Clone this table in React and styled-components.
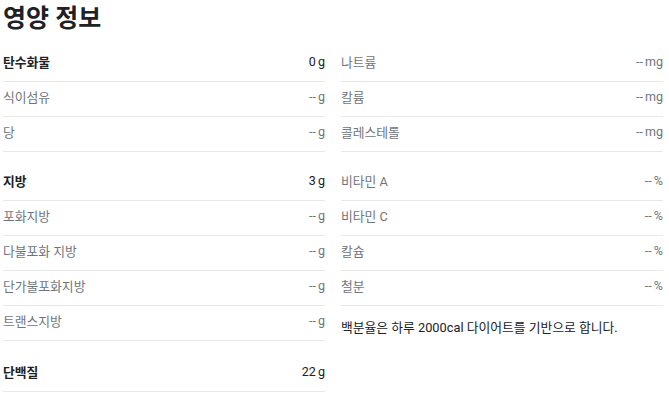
import React from 'react'
import styled, { createGlobalStyle } from 'styled-components'

const GlobalStyle = createGlobalStyle`
    body {
        margin: 0;
        background: #fff;
        font-family: Roboto, "Noto Sans CJK KR", sans-serif;
    }
`

const Panel = styled.div`
    width: 660px;
    padding: 0 0 0 3px;
`

const Title = styled.h2`
    margin: 0;
    font-size: 25px;
    font-weight: 700;
    line-height: 37px;
    color: #202124;
`

const Columns = styled.div`
    display: grid;
    grid-template-columns: 322px 322px;
    column-gap: 16px;
    margin-top: 10px;
`

const Column = styled.div`
    display: flex;
    flex-direction: column;
    gap: 14px;
`

const Section = styled.div`
    display: flex;
    flex-direction: column;
    margin-top: ${p => (p.$extra ? '2px' : '0')};
`

const Row = styled.div`
    display: flex;
    justify-content: space-between;
    align-items: center;
    height: 35px;
    padding-bottom: 5px;
    box-sizing: border-box;
    border-bottom: 1px solid #e8e8e8;
    font-size: 12.8px;
`

const Label = styled.span`
    color: ${p => (p.$main ? '#202124' : '#70757a')};
    font-weight: ${p => (p.$main ? 700 : 400)};
`

const Value = styled.span`
    color: ${p => (p.$main ? '#202124' : '#70757a')};
    font-size: 12.5px;
    word-spacing: -1px;
`

const Note = styled.p`
    margin: 0;
    line-height: 16px;
    font-size: 12.8px;
    color: #202124;
`

const left = [
    [
        ['탄수화물', '0 g', true],
        ['식이섬유', '-- g'],
        ['당', '-- g'],
    ],
    [
        ['지방', '3 g', true],
        ['포화지방', '-- g'],
        ['다불포화 지방', '-- g'],
        ['단가불포화지방', '-- g'],
        ['트랜스지방', '-- g'],
    ],
    [['단백질', '22 g', true]],
]

const right = [
    [
        ['나트륨', '-- mg'],
        ['칼륨', '-- mg'],
        ['콜레스테롤', '-- mg'],
    ],
    [
        ['비타민 A', '-- %'],
        ['비타민 C', '-- %'],
        ['칼슘', '-- %'],
        ['철분', '-- %'],
    ],
]

const renderSection = (rows, i) => (
    <Section key={i} $extra={i === 2}>
        {rows.map(([label, value, main]) => (
            <Row key={label}>
                <Label $main={main}>{label}</Label>
                <Value $main={main}>{value}</Value>
            </Row>
        ))}
    </Section>
)

const App = () => (
    <Panel>
        <GlobalStyle />
        <Title>영양 정보</Title>
        <Columns>
            <Column>{left.map(renderSection)}</Column>
            <Column>
                {right.map(renderSection)}
                <Note>백분율은 하루 2000cal 다이어트를 기반으로 합니다.</Note>
            </Column>
        </Columns>
    </Panel>
)

export default App
